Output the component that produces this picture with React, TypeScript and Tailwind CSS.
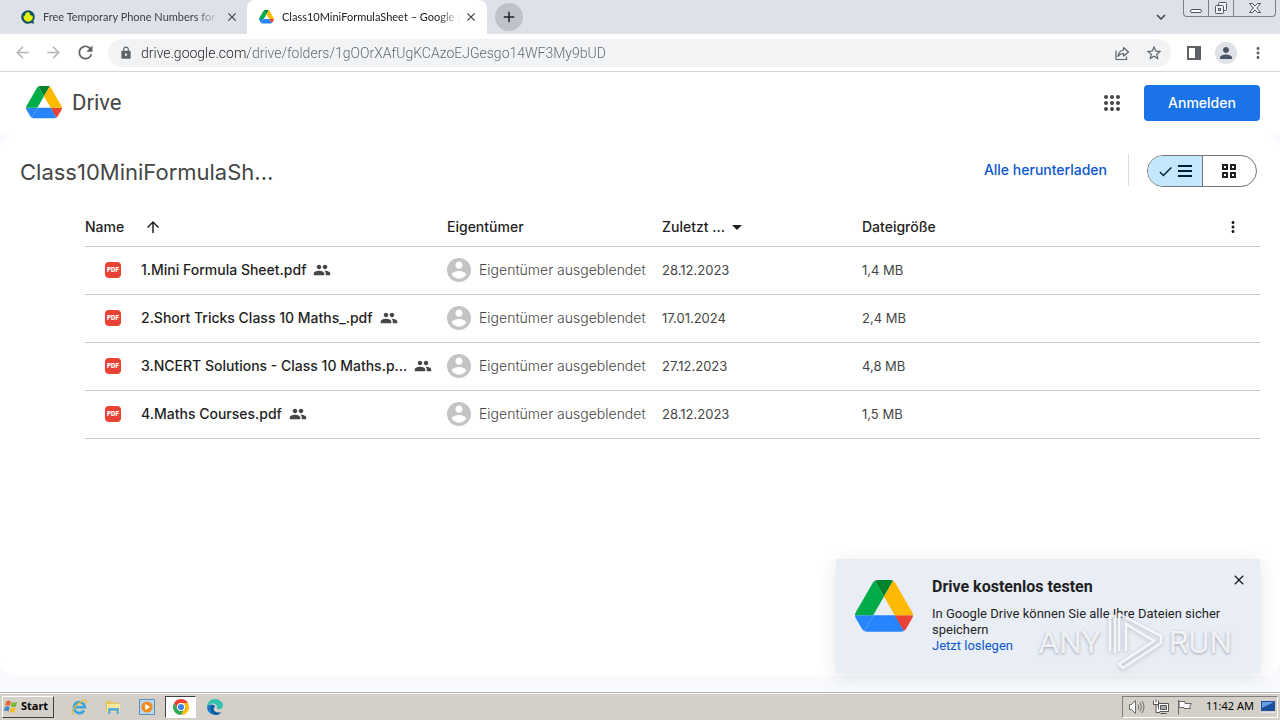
import type { ReactNode } from "react";
import {
  MdAdd,
  MdArrowBack,
  MdArrowDropDown,
  MdArrowForward,
  MdArrowUpward,
  MdCheck,
  MdClose,
  MdExpandMore,
  MdLock,
  MdMoreVert,
  MdPeople,
  MdPerson,
  MdRefresh,
  MdStarBorder,
} from "react-icons/md";

interface DriveFile {
  name: string;
  modified: string;
  size: string;
}

const files: DriveFile[] = [
  { name: "1.Mini Formula Sheet.pdf", modified: "28.12.2023", size: "1,4 MB" },
  { name: "2.Short Tricks Class 10 Maths_.pdf", modified: "17.01.2024", size: "2,4 MB" },
  { name: "3.NCERT Solutions - Class 10 Maths.p...", modified: "27.12.2023", size: "4,8 MB" },
  { name: "4.Maths Courses.pdf", modified: "28.12.2023", size: "1,5 MB" },
];

function DriveLogo({ className }: { className?: string }) {
  return (
    <svg viewBox="0 0 87.3 78" className={className} aria-hidden="true">
      <path fill="#2684fc" d="m6.6 66.85 3.85 6.65c.8 1.4 1.95 2.5 3.3 3.3l13.75-23.8h-27.5c0 1.55.4 3.1 1.2 4.5z" />
      <path fill="#00ac47" d="m43.65 25-13.75-23.8c-1.35.8-2.5 1.9-3.3 3.3l-25.4 44a9.06 9.06 0 0 0-1.2 4.5h27.5z" />
      <path fill="#ea4335" d="m73.55 76.8c1.35-.8 2.5-1.9 3.3-3.3l1.6-2.75 7.65-13.25c.8-1.4 1.2-2.95 1.2-4.5h-27.5l5.85 11.5z" />
      <path fill="#00832d" d="m43.65 25 13.75-23.8c-1.35-.8-2.9-1.2-4.5-1.2h-18.5c-1.6 0-3.15.45-4.5 1.2z" />
      <path fill="#2684fc" d="m59.8 53h-32.3l-13.75 23.8c1.35.8 2.9 1.2 4.5 1.2h50.8c1.6 0 3.15-.45 4.5-1.2z" />
      <path fill="#ffba00" d="m73.4 26.5-12.7-22c-.8-1.4-1.95-2.5-3.3-3.3l-13.75 23.8 16.15 28h27.45c0-1.55-.4-3.1-1.2-4.5z" />
    </svg>
  );
}

function TabStrip() {
  return (
    <div className="flex h-[34px] items-start bg-[#dee1e8]">
      <div className="flex h-[34px] w-[247px] items-center pl-5 pr-2">
        <svg viewBox="0 0 16 16" className="size-4 shrink-0" aria-hidden="true">
          <path fill="#155263" d="M8 1.2a6.8 6.8 0 1 0 3 12.9l3 .7-.5-3A6.8 6.8 0 0 0 8 1.200z" />
          <path fill="#e5f20d" d="M7.500 3.300a2.400 2.400 0 0 1 2.500 2.700c1.200.1 2.200.6 2.800 1.200a4.600 4.600 0 0 1-9.200 1.600V6.900l1.500-.3c0-1.900.9-3.300 2.400-3.300z" />
        </svg>
        <span className="ml-[7px] flex-1 overflow-hidden whitespace-nowrap font-[Lato,sans-serif] text-[11px] text-[#3c4043] [mask-image:linear-gradient(to_right,black_88%,transparent)]">
          Free Temporary Phone Numbers for
        </span>
        <button aria-label="Close tab" className="ml-2 text-[#3c4043]">
          <MdClose size={14} />
        </button>
      </div>
      <div className="flex h-[34px] w-60 items-center rounded-t-lg bg-white pl-3 pr-[9px]">
        <DriveLogo className="w-[15px] shrink-0" />
        <span className="ml-2 flex-1 overflow-hidden whitespace-nowrap font-[Lato,sans-serif] text-[11px] text-[#202124] [mask-image:linear-gradient(to_right,black_88%,transparent)]">
          Class10MiniFormulaSheet – Google D
        </span>
        <button aria-label="Close tab" className="ml-1 text-[#3c4043]">
          <MdClose size={14} />
        </button>
      </div>
      <button aria-label="New tab" className="ml-2 mt-[3px] flex size-7 items-center justify-center rounded-full bg-[#bfc2c9] text-[#202124]">
        <MdAdd size={18} />
      </button>
      <button aria-label="Search tabs" className="ml-auto mt-2 mr-[13px] text-[#3c4043]">
        <MdExpandMore size={18} />
      </button>
      <div className="mr-1 flex h-[17px] divide-x divide-[#7b7f87] overflow-hidden rounded-b border border-t-0 border-[#7b7f87] text-[#50545c]">
        <button aria-label="Minimize" className="flex w-[25px] items-end justify-center pb-[3px]">
          <span className="h-1 w-3 rounded-sm border border-[#50545c] bg-white" />
        </button>
        <button aria-label="Restore" className="flex w-[25px] items-center justify-center">
          <svg viewBox="0 0 14 14" className="size-[14px]" fill="#f2f3f6" stroke="currentColor" aria-hidden="true">
            <rect x="4.500" y="1.500" width="8" height="8" rx="1" />
            <rect x="1.500" y="4.500" width="8" height="8" rx="1" />
            <rect x="4.500" y="7.500" width="2" height="2" />
          </svg>
        </button>
        <button aria-label="Close" className="flex w-[41px] items-center justify-center">
          <svg viewBox="0 0 14 12" className="h-3 w-[14px]" fill="#f8f9fa" stroke="currentColor" aria-hidden="true">
            <path d="M1.500 1.500h3L7 4l2.500-2.500h3L8.800 6l3.700 4.500h-3L7 8l-2.500 2.500h-3L5.200 6z" />
          </svg>
        </button>
      </div>
    </div>
  );
}

function Toolbar() {
  return (
    <div className="flex h-[38px] items-center border-b border-[#d5d7da] bg-white px-[13px] text-[#5f6368]">
      <button aria-label="Back" className="text-[#b4b6b9]">
        <MdArrowBack size={19} />
      </button>
      <button aria-label="Forward" className="ml-3 text-[#b4b6b9]">
        <MdArrowForward size={19} />
      </button>
      <button aria-label="Reload" className="ml-3">
        <MdRefresh size={21} />
      </button>
      <div className="ml-3 flex h-7 flex-1 items-center rounded-full bg-[#f1f3f4] pl-[11px] pr-2">
        <MdLock size={14} />
        <input
          aria-label="Address"
          readOnly
          value="drive.google.com/drive/folders/1gOOrXAfUgKCAzoEJGesgo14WF3My9bUD"
          className="ml-2 min-w-0 flex-1 bg-linear-to-r from-[#202124] from-[107px] to-[#5f6368] to-[107px] bg-clip-text text-sm font-light text-transparent outline-none"
        />
        <button aria-label="Share">
          <svg viewBox="0 0 18 18" className="size-[18px]" fill="none" stroke="currentColor" strokeWidth="1.200" aria-hidden="true">
            <path d="M3 6.500v9h10.500v-3" />
            <path d="M10.500 3.500 15.500 8l-5 4V9.500C8 9.500 6.500 10.300 5 12.500 5.500 8.500 7.500 6.500 10.500 6z" strokeLinejoin="round" />
          </svg>
        </button>
        <button aria-label="Bookmark" className="ml-[14px]">
          <MdStarBorder size={18} />
        </button>
      </div>
      <button aria-label="Side panel" className="ml-[15px]">
        <svg viewBox="0 0 16 14" className="h-[14px] w-4" aria-hidden="true">
          <path fill="currentColor" d="M1 0h14v14H1zM3 2v10h6V2z" fillRule="evenodd" />
        </svg>
      </button>
      <button aria-label="Profile" className="ml-[13px] flex size-[22px] items-center justify-center rounded-full bg-[#dee1e6] text-[#4a5568]">
        <MdPerson size={18} />
      </button>
      <button aria-label="Menu" className="ml-3">
        <MdMoreVert size={18} />
      </button>
    </div>
  );
}

function AppsIcon() {
  return (
    <svg viewBox="0 0 16 16" className="size-4 fill-current" aria-hidden="true">
      {[2, 8, 14].map((cy) => [2, 8, 14].map((cx) => <circle key={`${cx}-${cy}`} cx={cx} cy={cy} r="2" />))}
    </svg>
  );
}

function DriveHeader() {
  return (
    <header className="flex h-[63px] items-center bg-white pb-0.5 pl-[26px] pr-5">
      <DriveLogo className="w-9" />
      <span className="ml-[10px] font-[Roboto,sans-serif] text-[22px] text-[#444746]">Drive</span>
      <button aria-label="Google Apps" className="ml-auto text-[#444746]">
        <AppsIcon />
      </button>
      <button className="ml-6 h-9 w-[116px] rounded bg-[#1a73e8] text-sm font-medium text-white">Anmelden</button>
    </header>
  );
}

function FolderBar() {
  return (
    <div className="flex items-start pl-5 pr-[23px] pt-[19px]">
      <h1 className="mt-0.5 text-[22px] leading-8 text-[#444746]">Class10MiniFormulaSh...</h1>
      <a href="#download" className="ml-auto mt-[6px] text-sm font-medium text-[#0b57d0]">
        Alle herunterladen
      </a>
      <div className="ml-[21px] h-8 w-px bg-[#dadce0]" />
      <div className="ml-[18px] mt-px flex h-8 w-[110px] overflow-hidden rounded-full border border-[#747775] text-[#1f1f1f]">
        <button aria-label="Listenlayout" aria-pressed="true" className="flex w-[55px] items-center justify-center gap-1 border-r border-[#747775] bg-[#c2e7ff] pr-0.5 text-[#001d35]">
          <MdCheck size={17} />
          <svg viewBox="0 0 14 12" className="h-3 w-[14px] fill-current" aria-hidden="true">
            <path d="M0 0h14v2H0zM0 5h14v2H0zM0 10h14v2H0z" />
          </svg>
        </button>
        <button aria-label="Rasterlayout" aria-pressed="false" className="flex flex-1 items-center justify-center pr-0.5">
          <svg viewBox="0 0 14 14" className="size-[14px]" fill="none" stroke="currentColor" strokeWidth="2" aria-hidden="true">
            <path d="M1 1h4v4H1zM9 1h4v4H9zM1 9h4v4H1zM9 9h4v4H9z" />
          </svg>
        </button>
      </div>
    </div>
  );
}

function HeadCell({ children }: { children?: ReactNode }) {
  return <th className="p-0 text-left font-medium text-[#1f1f1f]">{children}</th>;
}

function FileTable() {
  return (
    <div className="mt-5 pl-[85px] pr-5">
      <table className="w-full table-fixed border-collapse text-sm text-[#444746]">
        <colgroup>
          <col className="w-[362px]" />
          <col className="w-[215px]" />
          <col className="w-[200px]" />
          <col />
          <col className="w-9" />
        </colgroup>
        <thead>
          <tr className="h-[38px] border-b border-[#c7c7c7]">
            <HeadCell>
              <span className="flex items-center">
                Name
                <button aria-label="Sortierung umkehren" className="ml-5">
                  <MdArrowUpward size={18} />
                </button>
              </span>
            </HeadCell>
            <HeadCell>Eigentümer</HeadCell>
            <HeadCell>
              <button className="flex items-center">
                Zuletzt ...
                <MdArrowDropDown size={24} />
              </button>
            </HeadCell>
            <HeadCell>Dateigröße</HeadCell>
            <HeadCell>
              <button aria-label="Weitere Optionen" className="block">
                <MdMoreVert size={18} />
              </button>
            </HeadCell>
          </tr>
        </thead>
        <tbody>
          {files.map((file) => (
            <tr key={file.name} className="h-12 border-b border-[#c7c7c7]">
              <td className="p-0">
                <div className="flex items-center whitespace-nowrap pl-5 font-medium text-[#1f1f1f]">
                  <span className="flex size-4 items-center justify-center rounded-sm bg-[#ea4335] text-[6px] font-black text-white">
                    PDF
                  </span>
                  <span className="ml-5">{file.name}</span>
                  <MdPeople size={18} className="ml-[7px] text-[#444746]" />
                </div>
              </td>
              <td className="p-0">
                <div className="flex items-center gap-2 whitespace-nowrap font-light">
                  <svg viewBox="2 2 20 20" className="size-6 fill-[#c4c4c4]" aria-hidden="true">
                    <path d="M12 2C6.480 2 2 6.480 2 12s4.480 10 10 10 10-4.480 10-10S17.520 2 12 2zm0 3c1.660 0 3 1.340 3 3s-1.340 3-3 3-3-1.340-3-3 1.340-3 3-3zm0 14.200c-2.500 0-4.710-1.280-6-3.220.030-1.990 4-3.080 6-3.080 1.990 0 5.970 1.090 6 3.080-1.290 1.940-3.500 3.220-6 3.220z" />
                  </svg>
                  Eigentümer ausgeblendet
                </div>
              </td>
              <td className="p-0 text-[13px]">{file.modified}</td>
              <td className="p-0 text-[13px]">{file.size}</td>
              <td className="p-0" />
            </tr>
          ))}
        </tbody>
      </table>
    </div>
  );
}

function Promo() {
  return (
    <aside className="absolute bottom-[19px] right-5 flex h-[114px] w-[424px] items-start bg-[#e9eef6] pl-[19px] pr-[13px] pt-5 font-[Roboto,sans-serif] text-[#1f1f1f] shadow-[0_4px_16px_rgba(60,64,67,0.15)]">
      <DriveLogo className="mt-px w-[58px] shrink-0" />
      <div className="ml-[19px] w-[290px]">
        <h2 className="text-base leading-4 font-bold">Drive kostenlos testen</h2>
        <p className="mt-[11px] text-[13px] leading-4">In Google Drive können Sie alle Ihre Dateien sicher speichern</p>
        <a href="#start" className="block text-[13px] leading-4 text-[#0b57d0]">
          Jetzt loslegen
        </a>
      </div>
      <button aria-label="Schließen" className="-mt-[7px] ml-auto">
        <MdClose size={16} />
      </button>
      <Watermark />
    </aside>
  );
}

function Watermark() {
  return (
    <div className="pointer-events-none absolute bottom-0 right-7 flex h-[62px] items-center gap-1 text-[32px] leading-8 text-white/80 [text-shadow:0_1px_3px_rgba(100,105,120,0.6)]">
      <span>ANY</span>
      <svg viewBox="0 0 60 62" className="h-[62px] w-[60px] shrink-0 drop-shadow-[0_1px_2px_rgba(100,105,120,0.5)]" fill="none" stroke="#ffffff" strokeOpacity="0.800" strokeWidth="2.500" strokeLinejoin="round" aria-hidden="true">
        <path d="M5 40V5h5v37M14 40V3l42 22v7L18 57l-4-4 35-23L21 13v27" />
      </svg>
      <span>RUN</span>
    </div>
  );
}

function ChromeIcon() {
  return (
    <svg viewBox="0 0 16 16" className="size-4" aria-hidden="true">
      <path fill="#ea4335" d="M1.070 4A8 8 0 0 1 14.930 4H8a4 4 0 0 0-3.460 6z" />
      <path fill="#fbbc04" d="M14.930 4A8 8 0 0 1 8 16l3.460-6A4 4 0 0 0 8 4z" />
      <path fill="#34a853" d="M8 16A8 8 0 0 1 1.070 4l3.470 6A4 4 0 0 0 11.460 10z" />
      <circle cx="8" cy="8" r="4" fill="#fff" />
      <circle cx="8" cy="8" r="3.100" fill="#4285f4" />
    </svg>
  );
}

function Taskbar() {
  return (
    <footer className="flex h-7 items-center border-t border-[#b5b1a9] bg-[#d4d0c8] px-[2px] font-['Noto_Sans',sans-serif] text-[11px] text-black shadow-[inset_0_1px_0_#fff]">
      <button className="flex h-[22px] w-[52px] items-center border border-t-white border-r-[#404040] border-b-[#404040] border-l-white pl-px font-bold">
        <svg viewBox="0 0 16 16" className="mr-[2px] size-[15px] shrink-0" aria-hidden="true">
          <path fill="#e8622c" d="M2.500 2.500c2-1 3.500-.8 5 .3L6.300 7.500C4.800 6.500 3.300 6.400 1.300 7.300z" />
          <path fill="#75b82f" d="M8.500 3.200c1.800 1 3.400 1 5.500 0l-1.300 4.700c-2 .9-3.800.9-5.400-.1z" />
          <path fill="#3f86d0" d="M1 8.400c2-.9 3.500-.8 5 .2l-1.200 4.600c-1.500-1-3-1-5-.2z" />
          <path fill="#f6bd1c" d="M7 9c1.700 1 3.500 1 5.400.1l-1.200 4.600c-2 .9-3.800.9-5.400-.1z" />
        </svg>
        Start
      </button>
      <button aria-label="Internet Explorer" className="ml-4">
        <svg viewBox="0 0 18 18" className="size-[18px]" fill="none" aria-hidden="true">
          <path stroke="#38a5dd" strokeWidth="2.600" d="M14 12.500a5.500 5.500 0 1 1 .8-3.300H4.500" />
          <path stroke="#efb92d" strokeWidth="1.300" d="M3.500 16c-2.500-.2-1.500-4.500 2.500-8.300S15.300 1 16.300 2.400c.5.700.2 1.800-.4 3" />
        </svg>
      </button>
      <button aria-label="Explorer" className="ml-4">
        <svg viewBox="0 0 18 18" className="size-[18px]" aria-hidden="true">
          <path fill="#e5c65d" d="M2 3h5l1 1.500h7V14H2z" />
          <path fill="#f9e9a0" d="M3 6h13v8H3z" />
          <path fill="#5fb0d8" d="M4 10h11v6h-2.500v-3h-6v3H4z" />
        </svg>
      </button>
      <button aria-label="Media Player" className="ml-4">
        <svg viewBox="0 0 18 18" className="size-[18px]" aria-hidden="true">
          <path fill="#b9d7ee" stroke="#5b8fba" d="M1.500 1.500h15v15h-15z" />
          <circle cx="9" cy="9" r="5.600" fill="#f28a1c" />
          <path fill="#fff" d="m7.200 5.800 5 3.200-5 3.200z" />
        </svg>
      </button>
      <button aria-label="Chrome" className="ml-[9px] flex h-[22px] w-[31px] items-center justify-center border border-t-[#404040] border-r-white border-b-white border-l-[#404040] bg-white">
        <ChromeIcon />
      </button>
      <button aria-label="Edge" className="ml-[10px]">
        <svg viewBox="0 0 18 18" className="size-[18px]" aria-hidden="true">
          <path fill="#1b78c9" d="M1 9a8 8 0 0 0 13.500 5.800c-4 1-7-.8-7-3.600 0-1.400.7-2.300 1.700-2.800C6.500 5.500 1.500 6 1 9z" />
          <path fill="#35c1b1" d="M1 9c0-4.500 3.600-8 8-8s8 3 8 6.500c0 2.300-1.700 3.700-3.900 3.700-1.600 0-2.600-.5-2.100-1.500C12 7 8 4.500 5 5.800 3 6.600 1.500 7.700 1 9z" />
          <path fill="#0c59a4" d="M5.200 8c-1.500 3.500.5 7.500 4.800 9 2 0 4-1 5.500-3-4 1.500-8-.3-8-3 0-1.400.7-2.300 1.700-2.800C8 7.200 6.200 7 5.200 8z" />
        </svg>
      </button>
      <div className="ml-auto flex h-[22px] items-center border border-t-[#808080] border-r-white border-b-white border-l-[#808080] pl-[5px] pr-px">
        <svg viewBox="0 0 18 16" className="h-4 w-[18px]" fill="#fff" stroke="#6b6b6b" aria-hidden="true">
          <path d="M1.500 5.500h2l4-4v13l-4-4h-2z" />
          <path fill="none" d="M10 5.500q1.500 2.500 0 5M12 3.500q3 4.500 0 9M14 2q4 6 0 12" />
        </svg>
        <svg viewBox="0 0 18 16" className="ml-[6px] h-4 w-[18px]" fill="#fff" stroke="#555" aria-hidden="true">
          <path d="M6.500 4.500h10v8h-10zM8.500 14.500h6" />
          <path fill="#aaa" d="M8.500 6.500h6v4h-6z" />
          <path d="M1.500 1.500v4h5v-4M4 5.500v8h4M4 .5v3" />
        </svg>
        <svg viewBox="0 0 18 16" className="ml-[6px] h-4 w-[18px]" fill="#fff" stroke="#666" aria-hidden="true">
          <path d="M2.500 1v14.500M3 2.500h6v2h6.500l-2 3 1 2H8v-1H3z" />
        </svg>
        <time className="ml-3 whitespace-nowrap">11:42 AM</time>
        <svg viewBox="0 0 16 14" className="ml-[6px] h-[14px] w-4" aria-hidden="true">
          <path fill="#1f4e9c" d="M1 1h14v10H1z" />
          <path fill="#62a0e4" d="M2 2h12L2 8z" />
          <path fill="#dfe7f2" d="M1 12h14v1H1z" />
        </svg>
      </div>
    </footer>
  );
}

export default function App() {
  return (
    <div className="flex min-h-screen flex-col bg-white font-[Roboto,sans-serif]">
      <TabStrip />
      <Toolbar />
      <div className="relative flex flex-1 flex-col bg-[#f8fafd] pb-4 font-[Inter,sans-serif]">
        <DriveHeader />
        <main className="flex-1 rounded-2xl bg-white">
          <FolderBar />
          <FileTable />
        </main>
        <Promo />
      </div>
      <Taskbar />
    </div>
  );
}
